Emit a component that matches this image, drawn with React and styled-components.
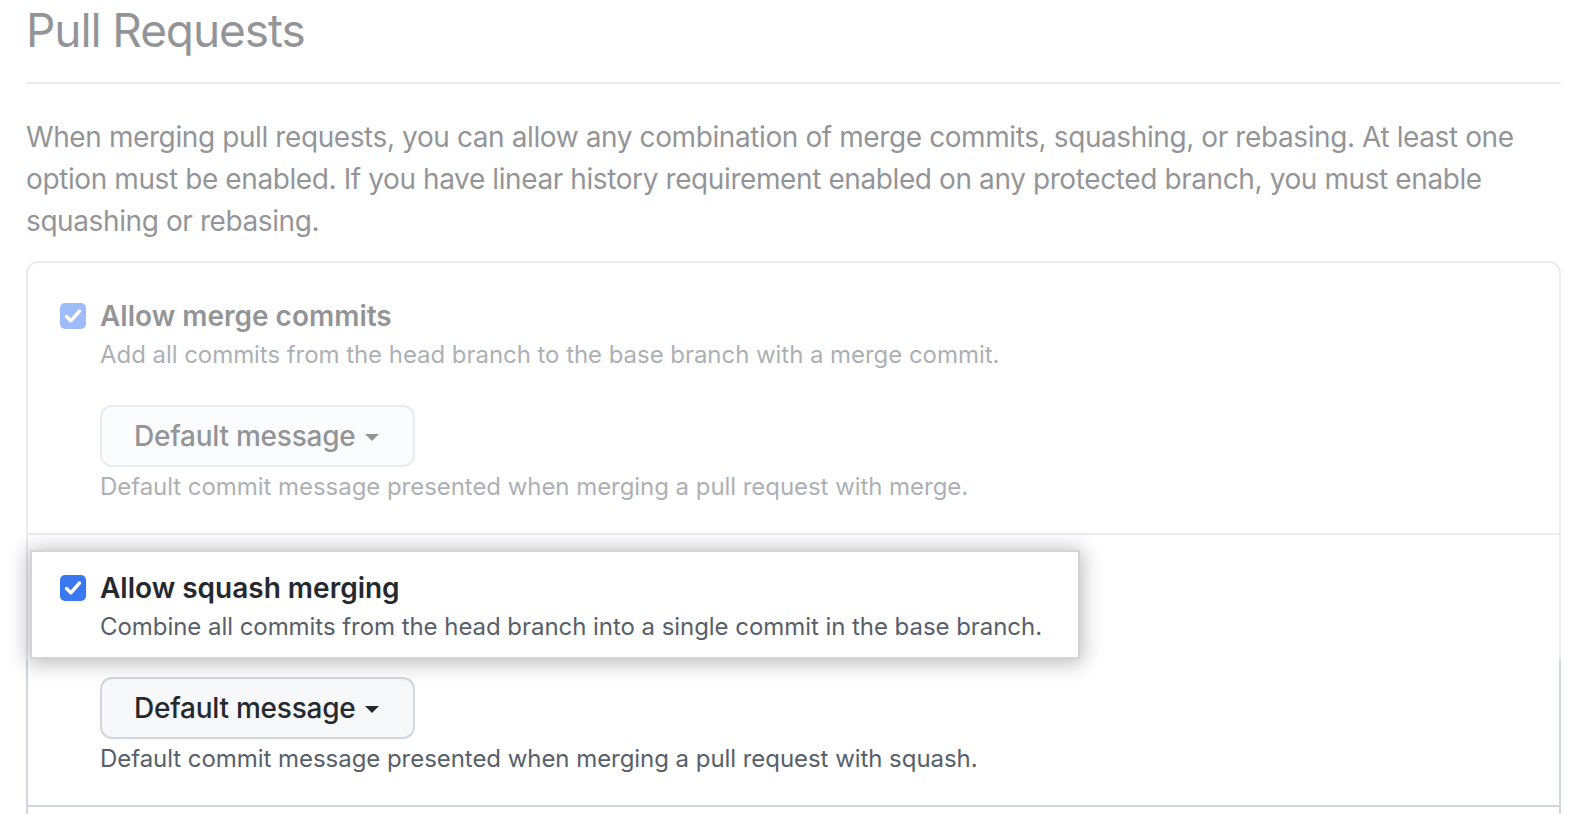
import React from "react";
import styled, { createGlobalStyle } from "styled-components";

const GlobalStyle = createGlobalStyle`
  body {
    margin: 0;
    background: #fff;
    font-family: Inter, "Noto Sans", "Liberation Sans", sans-serif;
    color: #24292f;
  }
`;

const Page = styled.div`
  position: relative;
  padding: 0 19px 0 26px;
`;

const Fade = styled.div`
  position: absolute;
  top: 0;
  left: 0;
  right: 0;
  height: 660px;
  background: rgba(255, 255, 255, 0.5);
  z-index: 1;
  pointer-events: none;
`;

const Subhead = styled.h2`
  margin: 0 0 32px;
  padding-bottom: 22px;
  border-bottom: 2px solid #d0d7de;
  font-size: 46px;
  font-weight: 400;
  line-height: 60px;
  letter-spacing: -1.1px;
  color: #24292f;
`;

const Intro = styled.p`
  margin: 0 0 19px;
  font-size: 28px;
  line-height: 42px;
  letter-spacing: -0.4px;
  color: #24292f;
`;

const Box = styled.div`
  border: 2px solid #d0d7de;
  border-radius: 12px;
`;

const Row = styled.div`
  min-height: 40px;
  padding: 32px 32px 28px;
  & + & {
    border-top: 2px solid #d0d7de;
  }
`;

const Highlight = styled.div`
  position: relative;
  z-index: 2;
  width: fit-content;
  background: #fff;
  margin: -15px 0 -12px -28px;
  padding: 15px 36px 12px 28px;
  box-shadow: 0 0 0 2px #d4d4d4, 0 2px 20px 4px rgba(0, 0, 0, 0.28);
`;

const OptionLabel = styled.label`
  display: flex;
  align-items: center;
  gap: 14px;
  font-size: 28px;
  font-weight: 600;
  line-height: 42px;
  color: #24292f;
`;

const Note = styled.p`
  margin: ${(p) => (p.$gap ? p.$gap : "0")} 0 0 40px;
  font-size: 24px;
  line-height: 36px;
  letter-spacing: -0.05px;
  color: #57606a;
`;

const SelectButton = styled.button`
  display: inline-flex;
  align-items: center;
  height: 62px;
  margin: 32px 0 0 40px;
  padding: 0 34px 0 32px;
  border: 2px solid #d0d7de;
  border-radius: 12px;
  background: #f6f8fa;
  font-family: inherit;
  font-size: 28px;
  font-weight: 500;
  letter-spacing: -0.25px;
  color: #24292f;
`;

const Caret = styled.span`
  margin-left: 10px;
  margin-top: 3px;
  border-top: 7px solid currentColor;
  border-left: 7px solid transparent;
  border-right: 7px solid transparent;
`;

const Check = () => (
  <svg width="26" height="26" viewBox="0 0 26 26">
    <rect x="0" y="0" width="26" height="26" rx="5" fill="#3a78f2" />
    <path
      d="M6.5 13.5 L10.8 17.8 L19.5 8"
      fill="none"
      stroke="#fff"
      strokeWidth="3.4"
      strokeLinecap="round"
      strokeLinejoin="round"
    />
  </svg>
);

const options = [
  {
    id: "merge",
    title: "Allow merge commits",
    desc: "Add all commits from the head branch to the base branch with a merge commit.",
    note: "Default commit message presented when merging a pull request with merge.",
  },
  {
    id: "squash",
    title: "Allow squash merging",
    desc: "Combine all commits from the head branch into a single commit in the base branch.",
    note: "Default commit message presented when merging a pull request with squash.",
    highlight: true,
  },
];

const OptionHead = ({ option }) => (
  <>
    <OptionLabel>
      <Check />
      {option.title}
    </OptionLabel>
    <Note>{option.desc}</Note>
  </>
);

const App = () => {
  return (
    <Page>
      <GlobalStyle />
      <Fade />
      <Subhead>Pull Requests</Subhead>
      <Intro>
        When merging pull requests, you can allow any combination of merge
        commits, squashing, or rebasing. At least one option must be enabled.
        If you have linear history requirement enabled on any protected branch,
        you must enable squashing or rebasing.
      </Intro>
      <Box>
        {options.map((option) => (
          <Row key={option.id}>
            {option.highlight ? (
              <Highlight>
                <OptionHead option={option} />
              </Highlight>
            ) : (
              <OptionHead option={option} />
            )}
            <SelectButton>
              Default message
              <Caret />
            </SelectButton>
            <Note $gap="2px">{option.note}</Note>
          </Row>
        ))}
        {/* next option row starts just below the fold */}
        <Row />
      </Box>
    </Page>
  );
};

export default App;
